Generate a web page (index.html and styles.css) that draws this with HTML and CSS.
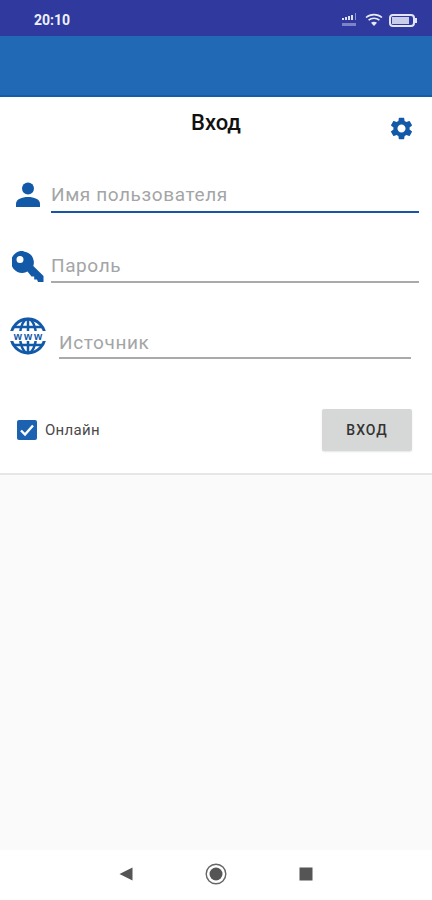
FILE: index.html
```html
<!DOCTYPE html>
<html lang="ru">
<head>
    <meta charset="UTF-8">
    <meta name="viewport" content="width=device-width, initial-scale=1.0">
    <title>Вход</title>
    <link rel="stylesheet" href="styles.css">
</head>
<body>
    <div class="screen">
        <div class="status-bar">
            <span class="status-time">20:10</span>
            <div class="status-icons">
                <svg class="icon-signal" viewBox="0 0 16 14" width="16" height="14">
                    <rect x="0" y="5" width="2" height="2" fill="#dfe2f4"/>
                    <rect x="3" y="4" width="2" height="3" fill="#dfe2f4"/>
                    <rect x="6" y="3" width="2" height="4" fill="#dfe2f4"/>
                    <rect x="9" y="2" width="2" height="5" fill="#dfe2f4"/>
                    <rect x="13" y="0" width="1" height="7" fill="#8f95cf"/>
                    <rect x="0" y="10" width="14" height="3" fill="#7c83c6"/>
                </svg>
                <svg class="icon-wifi" viewBox="0 0 18 14" width="18" height="14">
                    <path d="M1 4.500C5.500.6 12.500.6 17 4.500" fill="none" stroke="#e8eaf8" stroke-width="1.600"/>
                    <path d="M3.600 7.200c3.100-2.600 7.700-2.600 10.800 0" fill="none" stroke="#e8eaf8" stroke-width="1.600"/>
                    <path d="M6 9.800c1.800-1.400 4.200-1.400 6 0L9 13z" fill="#e8eaf8"/>
                </svg>
                <div class="battery">
                    <div class="battery-level"></div>
                </div>
                <div class="battery-tip"></div>
            </div>
        </div>
        <div class="app-bar"></div>

        <div class="card">
            <div class="card-header">
                <h1 class="card-title">Вход</h1>
                <svg class="icon-gear" viewBox="0 0 24 24" width="27" height="27">
                    <path fill="#1259a8" d="M19.14 12.94c.04-.3.06-.61.06-.94 0-.32-.02-.64-.07-.94l2.03-1.58a.49.49 0 0 0 .12-.61l-1.92-3.32a.488.488 0 0 0-.59-.22l-2.39.96c-.5-.38-1.03-.7-1.62-.94l-.36-2.54a.484.484 0 0 0-.48-.41h-3.84c-.24 0-.43.17-.47.41l-.36 2.54c-.59.24-1.13.57-1.62.94l-2.39-.96c-.22-.08-.47 0-.59.22L2.74 8.87c-.12.21-.08.47.12.61l2.03 1.58c-.05.3-.09.63-.09.94s.02.64.07.94l-2.03 1.58a.49.49 0 0 0-.12.61l1.92 3.32c.12.22.37.29.59.22l2.39-.96c.5.38 1.03.7 1.62.94l.36 2.54c.05.24.24.41.48.41h3.84c.24 0 .44-.17.47-.41l.36-2.54c.59-.24 1.13-.56 1.62-.94l2.39.96c.22.08.47 0 .59-.22l1.92-3.32c.12-.22.07-.47-.12-.61l-2.01-1.58zM12 15.6c-1.98 0-3.6-1.62-3.6-3.6s1.62-3.6 3.6-3.6 3.6 1.62 3.6 3.6-1.62 3.6-3.6 3.6z"/>
                </svg>
            </div>

            <div class="field field-user">
                <svg class="field-icon" viewBox="0 0 26 26" width="26" height="26">
                    <circle cx="13" cy="6.500" r="6" fill="#1259a8"/>
                    <path fill="#1259a8" d="M1 25v-3c0-5 6-7 12-7s12 2 12 7v3z"/>
                </svg>
                <div class="field-input field-active">Имя пользователя</div>
            </div>

            <div class="field field-pass">
                <svg class="field-icon" viewBox="0 0 32 32" width="32" height="32">
                    <path fill="#1259a8" fill-rule="evenodd" d="M11.500 0.500a11 11 0 0 1 9.800 14.500l10.200 10v6h-5.500l-1-2.500h-2.800v-3h-2.700l-4-5a11 11 0 1 1-4-20.500zM8 5a3.500 3.500 0 1 0 0 7 3.500 3.500 0 0 0 0-7z"/>
                </svg>
                <div class="field-input">Пароль</div>
            </div>

            <div class="field field-source">
                <svg class="field-icon" viewBox="0 0 36 38" width="36" height="38">
                    <circle cx="18" cy="19" r="17" fill="none" stroke="#1259a8" stroke-width="3"/>
                    <ellipse cx="18" cy="19" rx="8" ry="17" fill="none" stroke="#1259a8" stroke-width="2.500"/>
                    <path d="M18 2v34M4 10h28M4 28h28" fill="none" stroke="#1259a8" stroke-width="2.500"/>
                    <rect x="0" y="14" width="36" height="10" fill="#fff"/>
                    <text class="www" x="19" y="23" text-anchor="middle">www</text>
                </svg>
                <div class="field-input">Источник</div>
            </div>

            <div class="card-actions">
                <label class="online">
                    <span class="checkbox">
                        <svg viewBox="0 0 20 20" width="20" height="20">
                            <path d="M4 10.500l4 4 8-9" fill="none" stroke="#fff" stroke-width="2.400"/>
                        </svg>
                    </span>
                    <span class="online-label">Онлайн</span>
                </label>
                <button class="login-button">Вход</button>
            </div>
        </div>

        <div class="spacer"></div>

        <div class="nav-bar">
            <svg viewBox="0 0 14 14" width="14" height="14">
                <path d="M0.500 7L13.500 0.500v13z" fill="#555"/>
            </svg>
            <svg viewBox="0 0 22 22" width="22" height="22">
                <circle cx="11" cy="11" r="9.800" fill="none" stroke="#666" stroke-width="1.400"/>
                <circle cx="11" cy="11" r="6.500" fill="#555"/>
            </svg>
            <svg viewBox="0 0 14 14" width="14" height="14">
                <rect x="0.500" y="0.500" width="13" height="13" fill="#555"/>
            </svg>
        </div>
    </div>
</body>
</html>
```

FILE: styles.css
```css
* {
    margin: 0;
    padding: 0;
    box-sizing: border-box;
}

body {
    font-family: 'Roboto', 'Liberation Sans', sans-serif;
    background: #fafafa;
    overflow: hidden;
}

.screen {
    display: flex;
    flex-direction: column;
    height: 900px;
}

.status-bar {
    height: 36px;
    background: #30399e;
    display: flex;
    align-items: center;
    justify-content: space-between;
    padding: 4px 15px 0 34px;
    color: #eef0fb;
}

.status-time {
    font-size: 14px;
    font-weight: 700;
}

.status-icons {
    display: flex;
    align-items: center;
}

.icon-signal {
    margin-right: 7px;
}

.icon-wifi {
    margin-right: 6px;
}

.battery {
    width: 26px;
    height: 13px;
    border: 2px solid #e3e5f6;
    border-radius: 4px;
    padding: 1px;
}

.battery-level {
    width: 17px;
    height: 100%;
    background: #c9cdea;
}

.battery-tip {
    width: 2px;
    height: 5px;
    background: #e3e5f6;
}

.app-bar {
    height: 61px;
    background: #2169b5;
    border-bottom: 2px solid #155da6;
}

.card {
    height: 378px;
    background: #fff;
    border-bottom: 2px solid #e6e6e6;
    border-radius: 3px 3px 0 0;
    padding-top: 12px;
}

.card-header {
    position: relative;
    height: 49px;
    text-align: center;
}

.card-title {
    font-size: 22px;
    font-weight: 500;
    line-height: 28px;
    color: #111;
}

.icon-gear {
    position: absolute;
    top: 6px;
    right: 17px;
}

.field {
    display: flex;
    align-items: flex-start;
}

.field-icon {
    flex: none;
}

.field-input {
    flex: 1;
    font-size: 19px;
    line-height: 24px;
    color: #a3a5a6;
    border-bottom: 2px solid #a9aaaa;
    letter-spacing: 0.6px;
}

.field-active {
    border-bottom-color: #1a55a5;
}

.field-user {
    height: 71px;
    padding: 20px 13px 0 15px;
}

.field-user .field-icon {
    margin-top: 4px;
    margin-right: 10px;
}

.field-user .field-input {
    padding: 5px 0 4px;
}

.field-pass {
    height: 75px;
    padding: 22px 13px 0 12px;
}

.field-pass .field-icon {
    margin-right: 7px;
}

.field-pass .field-input {
    padding: 3px 0;
}

.field-source {
    height: 105px;
    padding: 13px 21px 0 10px;
}

.field-source .field-icon {
    margin-right: 13px;
}

.field-source .field-input {
    padding: 14px 0 2px;
}

.www {
    font-family: 'Liberation Sans', sans-serif;
    font-size: 10.5px;
    font-weight: 700;
    letter-spacing: 2px;
    fill: #1259a8;
}

.card-actions {
    display: flex;
    align-items: center;
    justify-content: space-between;
    padding: 0 20px 0 17px;
}

.online {
    display: flex;
    align-items: center;
    gap: 8px;
}

.checkbox {
    width: 20px;
    height: 20px;
    background: #1c62b0;
    border-radius: 2px;
    display: block;
}

.checkbox svg {
    display: block;
}

.online-label {
    font-size: 15px;
    letter-spacing: 0.3px;
    color: #4a4a4a;
}

.login-button {
    width: 90px;
    height: 42px;
    background: #d6d8d8;
    border: none;
    border-radius: 2px;
    font-family: inherit;
    font-size: 14px;
    font-weight: 500;
    letter-spacing: 1px;
    text-transform: uppercase;
    color: #333;
    box-shadow: 0 1px 2px rgba(0,0,0,0.1);
}

.spacer {
    flex: 1;
    background: #fafafa;
}

.nav-bar {
    height: 50px;
    background: #fff;
    display: flex;
    align-items: center;
    justify-content: space-between;
    padding: 0 119px 2px;
}
```
